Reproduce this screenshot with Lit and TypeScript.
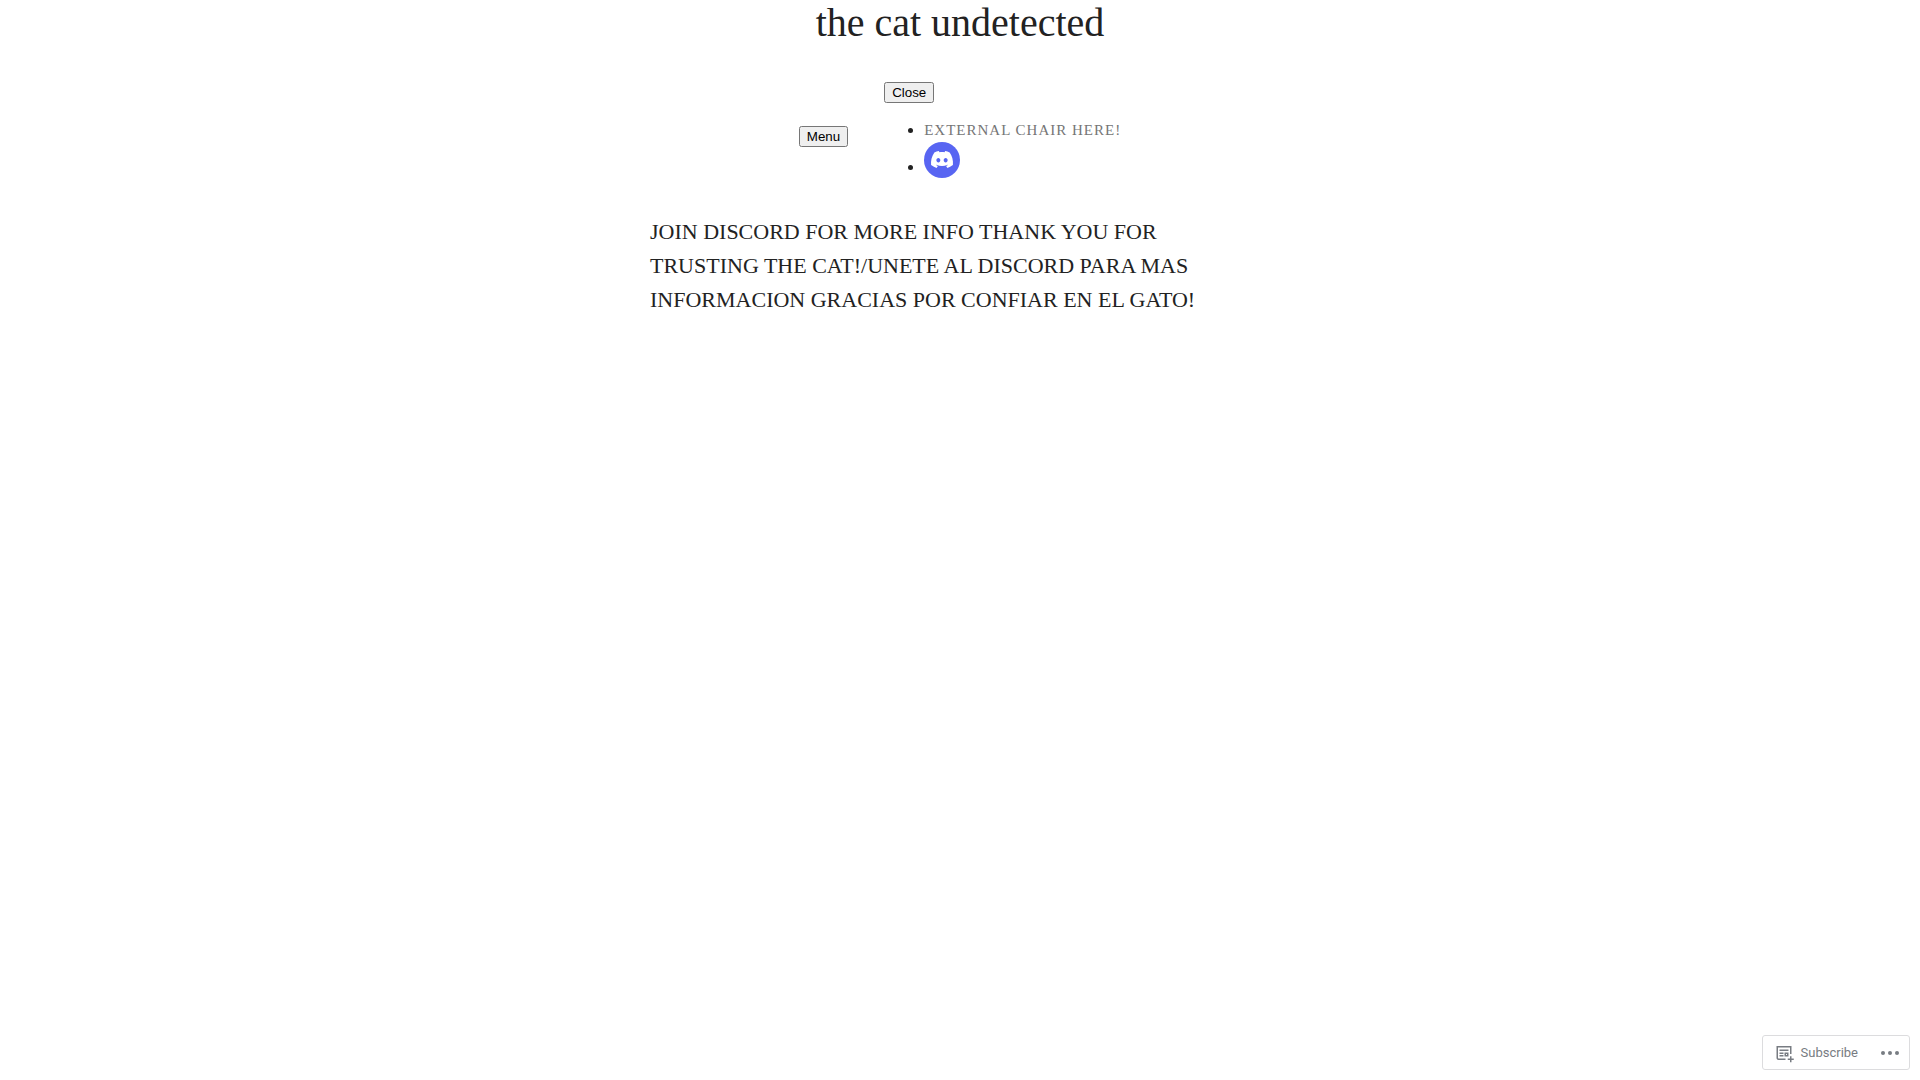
import { LitElement, html, css } from "lit";
import { customElement } from "lit/decorators.js";

@customElement("site-header")
class SiteHeader extends LitElement {
  static styles = css`
    :host {
      display: block;
    }
    .title {
      margin: 0;
      font-size: 40px;
      line-height: 46px;
      font-weight: 400;
      text-align: center;
    }
    .bar {
      display: flex;
      justify-content: center;
      align-items: center;
      gap: 36px;
      padding: 36px 0 12px;
    }
    .nav {
      display: flex;
      flex-direction: column;
      align-items: flex-start;
      gap: 15px;
      padding-bottom: 12px;
    }
    .links {
      margin: 0;
      padding: 0 0 0 40px;
      line-height: 24px;
    }
    .link {
      color: #767676;
      font-size: 15px;
      letter-spacing: 1px;
      text-transform: uppercase;
      text-decoration: none;
    }
    .icon {
      width: 36px;
      height: 36px;
      vertical-align: -6px;
    }
  `;

  render() {
    return html`
      <header>
        <h1 class="title">the cat undetected</h1>
        <div class="bar">
          <button type="button">Menu</button>
          <nav class="nav">
            <button type="button">Close</button>
            <ul class="links">
              <li><a class="link" href="#">External chair here!</a></li>
              <li>
                <a href="#" aria-label="Discord"
                  ><svg class="icon" viewBox="0 0 36 36" aria-hidden="true">
                    <circle cx="18" cy="18" r="18" fill="#5865f2" />
                    <path
                      fill="#fff"
                      transform="translate(7 6.5) scale(.917)"
                      d="M20.317 4.37a19.79 19.79 0 0 0-4.885-1.515.074.074 0 0 0-.079.037c-.211.375-.445.865-.608 1.25-1.845-.277-3.68-.277-5.487 0-.164-.394-.406-.875-.618-1.25a.077.077 0 0 0-.078-.037A19.74 19.74 0 0 0 3.677 4.37a.07.07 0 0 0-.032.028C.533 9.046-.319 13.58.099 18.058a.082.082 0 0 0 .031.056c2.053 1.508 4.042 2.423 5.993 3.029a.078.078 0 0 0 .084-.027c.462-.63.873-1.295 1.226-1.995a.076.076 0 0 0-.041-.105c-.653-.248-1.274-.55-1.872-.893a.077.077 0 0 1-.008-.128c.126-.094.252-.192.372-.291a.074.074 0 0 1 .078-.01c3.927 1.793 8.18 1.793 12.061 0a.074.074 0 0 1 .079.009c.12.099.246.198.372.293a.077.077 0 0 1-.006.127 12.3 12.3 0 0 1-1.873.892.077.077 0 0 0-.041.106c.36.698.772 1.363 1.225 1.994a.076.076 0 0 0 .084.028c1.961-.607 3.95-1.522 6.002-3.029a.077.077 0 0 0 .032-.056c.5-5.177-.838-9.674-3.549-13.66a.061.061 0 0 0-.031-.028zM8.02 15.331c-1.183 0-2.157-1.085-2.157-2.419 0-1.333.956-2.419 2.157-2.419 1.211 0 2.176 1.096 2.157 2.42 0 1.333-.956 2.418-2.157 2.418zm7.975 0c-1.183 0-2.157-1.085-2.157-2.419 0-1.333.955-2.419 2.157-2.419 1.211 0 2.176 1.096 2.157 2.42 0 1.333-.946 2.418-2.157 2.418z"
                    /></svg
                ></a>
              </li>
            </ul>
          </nav>
        </div>
      </header>
    `;
  }
}

@customElement("action-bar")
class ActionBar extends LitElement {
  static styles = css`
    :host {
      position: fixed;
      right: 10px;
      bottom: 10px;
      display: flex;
      align-items: center;
      gap: 20px;
      padding: 5px 7px 4px 11px;
      border: 1px solid #dcdcde;
      border-radius: 3px;
      background: #fff;
    }
    .action {
      display: flex;
      align-items: center;
      gap: 7px;
      padding: 0;
      border: 0;
      background: none;
      color: #787c82;
      font: 13px/24px Roboto, "Liberation Sans", sans-serif;
      text-decoration: none;
      cursor: pointer;
    }
    .follow {
      width: 20px;
      height: 20px;
      fill: currentColor;
    }
    .dots {
      width: 24px;
      height: 24px;
      fill: currentColor;
    }
  `;

  render() {
    return html`
      <a class="action" href="#">
        <svg class="follow" viewBox="0 0 20 20" aria-hidden="true">
          <path
            fill-rule="evenodd"
            clip-rule="evenodd"
            d="m4 4.5h12v6.5h1.5v-6.5-1.5h-1.5-12-1.5v1.5 10.5c0 1.10457.89543 2 2 2h7v-1.5h-7c-.27614 0-.5-.2239-.5-.5zm10.5 2h-9v1.5h9zm-5 3h-4v1.5h4zm3.5 1.5h-1v1h1zm-1-1.5h-1.5v1.5 1 1.5h1.5 1 1.5v-1.5-1-1.5h-1.5zm-2.5 2.5h-4v1.5h4zm6.5 1.25h1.5v2.25h2.25v1.5h-2.25v2.25h-1.5v-2.25h-2.25v-1.5h2.25z"
          />
        </svg>
        <span>Subscribe</span>
      </a>
      <button class="action" type="button" aria-label="More options">
        <svg class="dots" viewBox="0 0 24 24" aria-hidden="true">
          <circle cx="5" cy="12" r="2" />
          <circle cx="12" cy="12" r="2" />
          <circle cx="19" cy="12" r="2" />
        </svg>
      </button>
    `;
  }
}

@customElement("app-root")
class AppRoot extends LitElement {
  static styles = css`
    :host {
      display: block;
      color: #222;
      font-family: "Liberation Serif", "Times New Roman", serif;
      font-size: 16px;
    }
    .content {
      max-width: 620px;
      margin: 0 auto;
      padding: 12px 0;
    }
    .lead {
      margin: 0;
      font-size: 22px;
      line-height: 34px;
    }
  `;

  render() {
    return html`
      <site-header></site-header>
      <main class="content">
        <p class="lead">
          JOIN DISCORD FOR MORE INFO THANK YOU FOR TRUSTING THE CAT!/UNETE AL
          DISCORD PARA MAS INFORMACION GRACIAS POR CONFIAR EN EL GATO!
        </p>
      </main>
      <action-bar></action-bar>
    `;
  }
}
